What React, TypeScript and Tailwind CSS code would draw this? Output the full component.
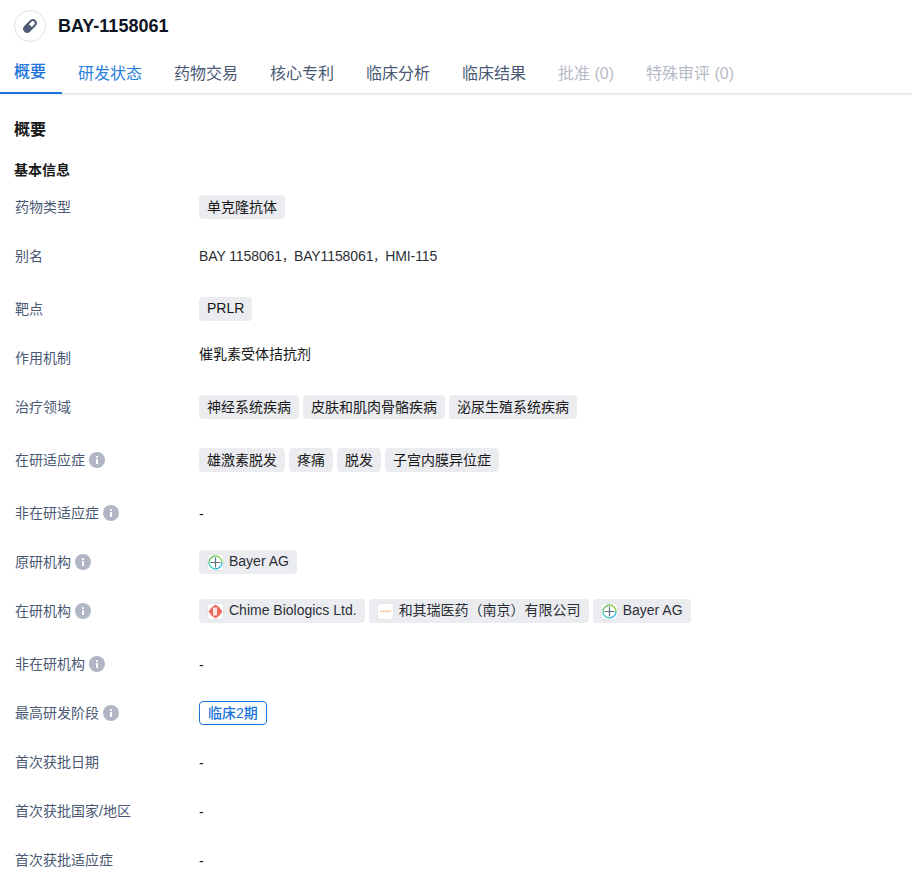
import React from "react";

const Info = () => (
  <svg width="16" height="16" viewBox="0 0 16 16" className="ml-1 shrink-0">
    <circle cx="8" cy="8" r="8" fill="#b0b6c4" />
    <rect x="7" y="7" width="2" height="5" rx="0.5" fill="#fff" />
    <rect x="7" y="4" width="2" height="2" rx="0.5" fill="#fff" />
  </svg>
);

const Tag = ({ children, latin }: { children: React.ReactNode; latin?: boolean }) => (
  <span className={`inline-flex h-6 items-center rounded bg-[#ebecf0] px-2 text-sm leading-6 text-[#181818] ${latin ? "pb-[2px]" : ""}`}>{children}</span>
);

const LogoBox = ({ children }: { children: React.ReactNode }) => (
  <span className="mr-[5px] flex h-[17px] w-[17px] shrink-0 items-center justify-center overflow-hidden rounded-[3px] border border-[#e4e6ea] bg-white">{children}</span>
);

const Bayer = () => (
  <LogoBox>
    <svg width="15" height="15" viewBox="0 0 15 15" fill="none" className="shrink-0">
      <path d="M7.5 1a6.5 6.5 0 0 1 6.5 6.5" stroke="#8fd14f" strokeWidth="1.4" />
      <path d="M14 7.5a6.5 6.5 0 0 1-6.5 6.5" stroke="#2fb5e0" strokeWidth="1.4" />
      <path d="M7.5 14A6.5 6.5 0 0 1 1 7.5" stroke="#3ccfc0" strokeWidth="1.4" />
      <path d="M1 7.5A6.5 6.5 0 0 1 7.5 1" stroke="#6cc56a" strokeWidth="1.4" />
      <path d="M7.5 2.5v10M2.5 7.5h10" stroke="#5f7480" strokeWidth="1.2" />
    </svg>
  </LogoBox>
);

const Chime = () => (
  <LogoBox>
    <svg width="15" height="15" viewBox="0 0 15 15" className="shrink-0">
      <path d="M7.5 0.5l4 3 3 4-3 4-4 3-4-3-3-4 3-4z" fill="#ee6a5c" />
      <rect x="5" y="3.5" width="4" height="8" fill="#fde6e1" />
    </svg>
  </LogoBox>
);

const Heqi = () => (
  <LogoBox>
    <svg width="15" height="15" viewBox="0 0 15 15" className="shrink-0">
      <rect x="2" y="6.5" width="11" height="1.6" fill="#f8cfa8" />
    </svg>
  </LogoBox>
);

const Org = ({ logo, name }: { logo: React.ReactNode; name: string }) => (
  <span className="inline-flex h-6 items-center rounded bg-[#ebecf0] pl-2 pr-2 text-sm text-[#2c2f36]">
    {logo}
    <span className="-mt-[2px]">{name}</span>
  </span>
);

const Dash = () => <span className="h-6 pt-[1px] text-sm leading-6 text-[#181818]">-</span>;

const Comma = () => <span className="text-xs">，</span>;

const Row = ({
  label,
  info,
  tall,
  children,
}: {
  label: string;
  info?: boolean;
  tall?: boolean;
  children: React.ReactNode;
}) => (
  <div className={`flex items-start ${tall ? "pb-[29px]" : "pb-[25px]"}`}>
    <div className="flex h-6 w-[185px] shrink-0 items-center text-sm text-[#4a5873]">
      <span className="ml-[1px]">{label}</span>
      {info && <Info />}
    </div>
    <div className="flex h-6 gap-1">{children}</div>
  </div>
);

const tabs = ["研发状态", "药物交易", "核心专利", "临床分析", "临床结果"];

export default function App() {
  return (
    <div
      className="h-[889px] overflow-hidden bg-white"
      style={{ fontFamily: '"Liberation Sans","Noto Sans CJK SC",sans-serif' }}
    >
      <header className="flex h-[52px] items-center pl-[14px]">
        <span className="flex h-8 w-8 items-center justify-center rounded-full border border-[#dfe1e6]">
          <svg width="18" height="18" viewBox="0 0 18 18">
            <g transform="rotate(-45 9 9)">
              <rect x="1" y="5" width="16" height="8" rx="4" fill="#4f5b76" />
              <path d="M9.5 7H13a2 2 0 0 1 0 4H9.5z" fill="#fff" />
            </g>
          </svg>
        </span>
        <h1 className="ml-3 text-lg font-bold text-[#0d1424]">BAY-1158061</h1>
      </header>
      <nav className="flex h-[42px] items-start border-b border-[#e4e6ea] text-base shadow-[0_1px_2px_rgba(0,0,0,0.08)]">
        <span className="flex h-[42px] w-[62px] items-center border-b-2 border-[#1a73d9] pl-[14px] font-medium text-[#1a73d9]">
          概要
        </span>
        <span className="ml-4 flex h-11 items-center text-[#2b82dc]">{tabs[0]}</span>
        {tabs.slice(1).map((t) => (
          <span key={t} className="ml-8 flex h-11 items-center text-[#4a5873]">
            {t}
          </span>
        ))}
        <span className="ml-8 flex h-11 items-center text-[#b5bac6]">批准 (0)</span>
        <span className="ml-8 flex h-11 items-center text-[#b5bac6]">特殊审评 (0)</span>
      </nav>
      <main className="px-[14px]">
        <h2 className="mt-[24px] text-base leading-6 font-bold text-[#181818]">概要</h2>
        <h3 className="mt-[17px] mb-[15px] pt-[1px] text-sm leading-5 font-bold text-[#181818]">基本信息</h3>
        <Row label="药物类型"><Tag>单克隆抗体</Tag></Row>
        <Row label="别名" tall>
          <span className="text-sm leading-6 tracking-[-0.1px] text-[#2c2f36]">BAY 1158061<Comma />BAY1158061<Comma />HMI-115</span>
        </Row>
        <Row label="靶点"><Tag latin>PRLR</Tag></Row>
        <Row label="作用机制">
          <span className="-mt-1 text-sm leading-6 text-[#181818]">催乳素受体拮抗剂</span>
        </Row>
        <Row label="治疗领域" tall>
          <Tag>神经系统疾病</Tag>
          <Tag>皮肤和肌肉骨骼疾病</Tag>
          <Tag>泌尿生殖系统疾病</Tag>
        </Row>
        <Row label="在研适应症" info tall>
          <Tag>雄激素脱发</Tag>
          <Tag>疼痛</Tag>
          <Tag>脱发</Tag>
          <Tag>子宫内膜异位症</Tag>
        </Row>
        <Row label="非在研适应症" info><Dash /></Row>
        <Row label="原研机构" info><Org logo={<Bayer />} name="Bayer AG" /></Row>
        <Row label="在研机构" info tall>
          <Org logo={<Chime />} name="Chime Biologics Ltd." />
          <Org logo={<Heqi />} name="和其瑞医药（南京）有限公司" />
          <Org logo={<Bayer />} name="Bayer AG" />
        </Row>
        <Row label="非在研机构" info><Dash /></Row>
        <Row label="最高研发阶段" info>
          <span className="flex h-6 items-center rounded border border-[#1a73d9] px-2 pb-[1px] text-sm font-medium text-[#1a73d9]">临床2期</span>
        </Row>
        <Row label="首次获批日期"><Dash /></Row>
        <Row label="首次获批国家/地区"><Dash /></Row>
        <Row label="首次获批适应症"><Dash /></Row>
      </main>
    </div>
  );
}
